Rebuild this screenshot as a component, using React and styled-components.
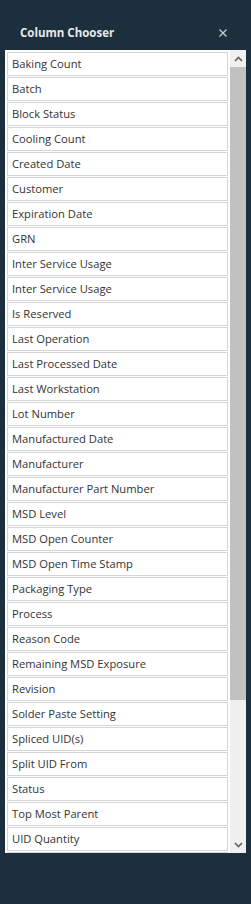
import React from "react";
import styled, { createGlobalStyle } from "styled-components";

const Global = createGlobalStyle`
  html, body { margin: 0; padding: 0; background: #1b2f3d; }
  body { width: 251px; height: 904px; overflow: hidden; font-family: "Segoe UI", "Noto Sans", sans-serif; }
`;

const Wrapper = styled.div`
  width: 251px;
  height: 904px;
  background: #1b2f3d;
  display: flex;
  flex-direction: column;
`;

const Header = styled.div`
  height: 50px;
  display: flex;
  align-items: center;
  justify-content: space-between;
  padding: 15px 24px 0 20px;
  box-sizing: border-box;
`;

const Title = styled.div`
  color: #e6e9ec;
  font-family: "Open Sans", sans-serif;
  font-weight: 700;
  font-size: 11.5px;
`;

const Close = styled.div`
  width: 8px;
  height: 8px;
  display: flex;
  color: #c9ced3;
`;

const Panel = styled.div`
  margin-left: 5px;
  width: 241px;
  height: 803px;
  background: #ffffff;
  display: flex;
  gap: 2px;
  padding-left: 2px;
  box-sizing: border-box;
  overflow: hidden;
`;

const List = styled.div`
  width: 221px;
  padding-top: 2px;
  display: flex;
  flex-direction: column;
  gap: 1px;
  overflow: hidden;
`;

const Item = styled.div`
  flex: none;
  height: 24px;
  box-sizing: border-box;
  border: 1px solid #d5d5d5;
  display: flex;
  align-items: center;
  padding: 0 0 1px 4px;
  font-family: "Open Sans", sans-serif;
  font-size: 11.2px;
  color: #333333;
  white-space: nowrap;
`;

const ScrollBar = styled.div`
  width: 16px;
  display: flex;
  flex-direction: column;
  background: #f0f0f0;
`;

const Arrow = styled.div`
  height: 17px;
  flex: none;
  display: flex;
  align-items: center;
  justify-content: center;
`;

const Thumb = styled.div`
  flex: none;
  height: 633px;
  background: #c1c1c1;
`;

const Track = styled.div`
  flex: 1;
`;

const items = [
  "Baking Count", "Batch", "Block Status", "Cooling Count", "Created Date",
  "Customer", "Expiration Date", "GRN", "Inter Service Usage", "Inter Service Usage",
  "Is Reserved", "Last Operation", "Last Processed Date", "Last Workstation",
  "Lot Number", "Manufactured Date", "Manufacturer", "Manufacturer Part Number",
  "MSD Level", "MSD Open Counter", "MSD Open Time Stamp", "Packaging Type",
  "Process", "Reason Code", "Remaining MSD Exposure", "Revision",
  "Solder Paste Setting", "Spliced UID(s)", "Split UID From", "Status",
  "Top Most Parent", "UID Quantity", ""
];

export default function App() {
  return (
    <Wrapper>
      <Global />
      <Header>
        <Title>Column Chooser</Title>
        <Close>
          <svg width="8" height="8" viewBox="0 0 8 8">
            <path d="M0.5 0.5 L7.5 7.5 M7.5 0.5 L0.5 7.5" stroke="currentColor" strokeWidth="1.3" />
          </svg>
        </Close>
      </Header>
      <Panel>
        <List>
          {items.map((t, i) => (
            <Item key={i}>{t}</Item>
          ))}
        </List>
        <ScrollBar>
          <Arrow>
            <svg width="9" height="6" viewBox="0 0 9 6">
              <path d="M1 5 L4.5 1.5 L8 5" stroke="#606060" strokeWidth="1.6" fill="none" />
            </svg>
          </Arrow>
          <Thumb />
          <Track />
          <Arrow>
            <svg width="9" height="6" viewBox="0 0 9 6">
              <path d="M1 1 L4.5 4.5 L8 1" stroke="#606060" strokeWidth="1.6" fill="none" />
            </svg>
          </Arrow>
        </ScrollBar>
      </Panel>
    </Wrapper>
  );
}
